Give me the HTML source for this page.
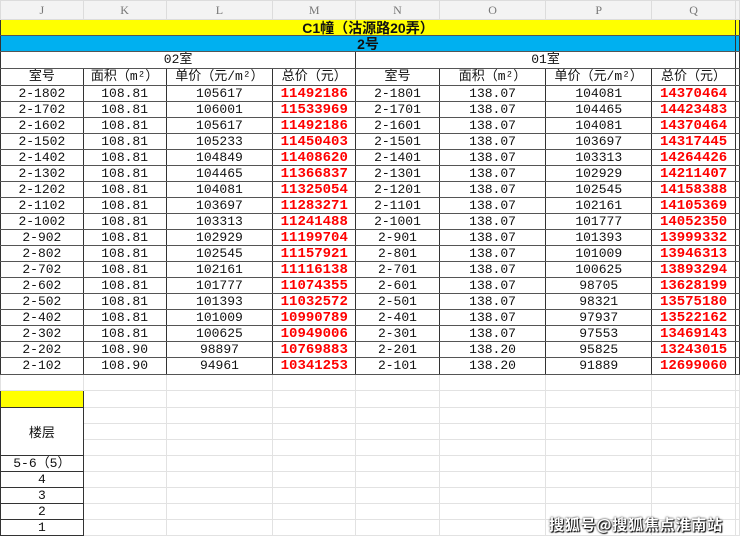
<!DOCTYPE html>
<html><head><meta charset="utf-8"><style>
body{margin:0;width:740px;height:539px;overflow:hidden;background:#fff;font-family:"Liberation Mono","Noto Sans CJK SC",monospace;}
table{border-collapse:collapse;table-layout:fixed;position:absolute;left:0;top:0;}
td{padding:0;text-align:center;font-size:13px;line-height:14px;color:#111;white-space:nowrap;overflow:hidden;border:1px solid #e2e2e2;}
tr.h td{background:#f3f3f3;color:#777;height:18px;font-size:12px;border-color:#dcdcdc;font-family:"Liberation Serif",serif;}
.d td{border-color:#555 #333;height:15px;}
.r{color:#f00;font-weight:bold;font-size:14px;}
.y{background:#ffff00;}
.b{background:#00b0f0;}
.e td{height:15px;}
.wm{position:absolute;left:549px;top:514px;font:bold 15px "Noto Sans CJK SC",sans-serif;color:#fff;text-shadow:0 0 2px #000,1px 1px 1px #000;letter-spacing:0.8px;}
</style></head><body>
<table>
<colgroup><col style="width:83px"><col style="width:83px"><col style="width:107px"><col style="width:83px"><col style="width:84px"><col style="width:107px"><col style="width:106px"><col style="width:84px"><col style="width:4px"></colgroup>
<tr class="h"><td>J</td><td>K</td><td>L</td><td>M</td><td>N</td><td>O</td><td>P</td><td>Q</td><td></td></tr>
<tr class="d"><td colspan="8" class="y" style="font-weight:bold;font-family:'Liberation Sans','Noto Sans CJK SC',sans-serif;font-size:14px">C1幢（沽源路20弄）</td><td class="y"></td></tr>
<tr class="d"><td colspan="8" class="b" style="font-weight:bold;font-size:14px;font-family:'Liberation Sans','Noto Sans CJK SC',sans-serif">2号</td><td class="b"></td></tr>
<tr class="d"><td colspan="4" style="height:16px">02室</td><td colspan="4">01室</td><td></td></tr>
<tr class="d"><td style="height:16px">室号</td><td>面积（m²）</td><td>单价（元/m²）</td><td>总价（元）</td><td>室号</td><td>面积（m²）</td><td>单价（元/m²）</td><td>总价（元）</td><td></td></tr>
<tr class="d"><td>2-1802</td><td>108.81</td><td>105617</td><td class="r">11492186</td><td>2-1801</td><td>138.07</td><td>104081</td><td class="r">14370464</td><td></td></tr>
<tr class="d"><td>2-1702</td><td>108.81</td><td>106001</td><td class="r">11533969</td><td>2-1701</td><td>138.07</td><td>104465</td><td class="r">14423483</td><td></td></tr>
<tr class="d"><td>2-1602</td><td>108.81</td><td>105617</td><td class="r">11492186</td><td>2-1601</td><td>138.07</td><td>104081</td><td class="r">14370464</td><td></td></tr>
<tr class="d"><td>2-1502</td><td>108.81</td><td>105233</td><td class="r">11450403</td><td>2-1501</td><td>138.07</td><td>103697</td><td class="r">14317445</td><td></td></tr>
<tr class="d"><td>2-1402</td><td>108.81</td><td>104849</td><td class="r">11408620</td><td>2-1401</td><td>138.07</td><td>103313</td><td class="r">14264426</td><td></td></tr>
<tr class="d"><td>2-1302</td><td>108.81</td><td>104465</td><td class="r">11366837</td><td>2-1301</td><td>138.07</td><td>102929</td><td class="r">14211407</td><td></td></tr>
<tr class="d"><td>2-1202</td><td>108.81</td><td>104081</td><td class="r">11325054</td><td>2-1201</td><td>138.07</td><td>102545</td><td class="r">14158388</td><td></td></tr>
<tr class="d"><td>2-1102</td><td>108.81</td><td>103697</td><td class="r">11283271</td><td>2-1101</td><td>138.07</td><td>102161</td><td class="r">14105369</td><td></td></tr>
<tr class="d"><td>2-1002</td><td>108.81</td><td>103313</td><td class="r">11241488</td><td>2-1001</td><td>138.07</td><td>101777</td><td class="r">14052350</td><td></td></tr>
<tr class="d"><td>2-902</td><td>108.81</td><td>102929</td><td class="r">11199704</td><td>2-901</td><td>138.07</td><td>101393</td><td class="r">13999332</td><td></td></tr>
<tr class="d"><td>2-802</td><td>108.81</td><td>102545</td><td class="r">11157921</td><td>2-801</td><td>138.07</td><td>101009</td><td class="r">13946313</td><td></td></tr>
<tr class="d"><td>2-702</td><td>108.81</td><td>102161</td><td class="r">11116138</td><td>2-701</td><td>138.07</td><td>100625</td><td class="r">13893294</td><td></td></tr>
<tr class="d"><td>2-602</td><td>108.81</td><td>101777</td><td class="r">11074355</td><td>2-601</td><td>138.07</td><td>98705</td><td class="r">13628199</td><td></td></tr>
<tr class="d"><td>2-502</td><td>108.81</td><td>101393</td><td class="r">11032572</td><td>2-501</td><td>138.07</td><td>98321</td><td class="r">13575180</td><td></td></tr>
<tr class="d"><td>2-402</td><td>108.81</td><td>101009</td><td class="r">10990789</td><td>2-401</td><td>138.07</td><td>97937</td><td class="r">13522162</td><td></td></tr>
<tr class="d"><td>2-302</td><td>108.81</td><td>100625</td><td class="r">10949006</td><td>2-301</td><td>138.07</td><td>97553</td><td class="r">13469143</td><td></td></tr>
<tr class="d"><td>2-202</td><td>108.90</td><td>98897</td><td class="r">10769883</td><td>2-201</td><td>138.20</td><td>95825</td><td class="r">13243015</td><td></td></tr>
<tr class="d"><td style="height:16px">2-102</td><td>108.90</td><td>94961</td><td class="r">10341253</td><td>2-101</td><td>138.20</td><td>91889</td><td class="r">12699060</td><td></td></tr>
<tr class="e"><td style="height:15px;border-top-color:#555"></td><td style="border-top-color:#555"></td><td style="border-top-color:#555"></td><td style="border-top-color:#555"></td><td style="border-top-color:#555"></td><td style="border-top-color:#555"></td><td style="border-top-color:#555"></td><td style="border-top-color:#555"></td><td></td></tr>
<tr class="e"><td class="y" style="border:1px solid #333;height:16px"></td><td></td><td></td><td></td><td></td><td></td><td></td><td></td><td></td></tr>
<tr class="e"><td rowspan="3" style="border:1px solid #333;font-family:'Noto Sans CJK SC',sans-serif">楼层</td><td></td><td></td><td></td><td></td><td></td><td></td><td></td><td></td></tr>
<tr class="e"><td></td><td></td><td></td><td></td><td></td><td></td><td></td><td></td></tr>
<tr class="e"><td></td><td></td><td></td><td></td><td></td><td></td><td></td><td></td></tr>
<tr class="e"><td style="border:1px solid #333">5-6（5）</td><td></td><td></td><td></td><td></td><td></td><td></td><td></td><td></td></tr>
<tr class="e"><td style="border:1px solid #333">4</td><td></td><td></td><td></td><td></td><td></td><td></td><td></td><td></td></tr>
<tr class="e"><td style="border:1px solid #333">3</td><td></td><td></td><td></td><td></td><td></td><td></td><td></td><td></td></tr>
<tr class="e"><td style="border:1px solid #333">2</td><td></td><td></td><td></td><td></td><td></td><td></td><td></td><td></td></tr>
<tr class="e"><td style="border:1px solid #333">1</td><td></td><td></td><td></td><td></td><td></td><td></td><td></td><td></td></tr>
</table>
<div class="wm">搜狐号@搜狐焦点淮南站</div>
</body></html>
